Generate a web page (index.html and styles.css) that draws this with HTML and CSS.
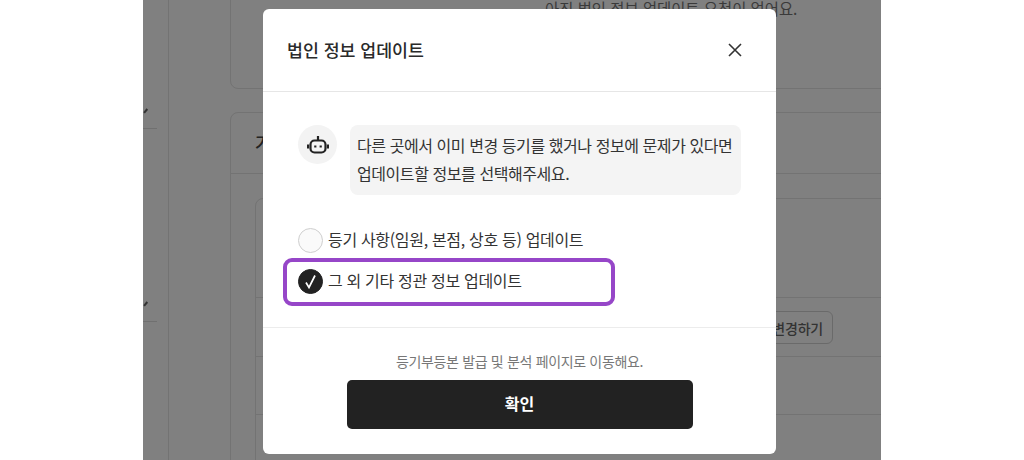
FILE: index.html
```html
<!DOCTYPE html>
<html lang="ko">
<head>
  <meta charset="UTF-8">
  <meta name="viewport" content="width=device-width, initial-scale=1.0">
  <title>법인 정보 업데이트</title>
  <link rel="stylesheet" href="styles.css">
</head>
<body>

  <!-- 뒤쪽 페이지 (어둡게 처리됨) -->
  <div class="page">
    <div class="side">
      <div class="side-item side-item-first"><span class="side-chevron"></span></div>
      <div class="side-item side-item-second"><span class="side-chevron"></span></div>
    </div>
    <div class="main">
      <div class="card card-top">
        <p class="empty-text">아직 법인 정보 업데이트 요청이 없어요.</p>
      </div>
      <div class="card card-bottom">
        <div class="card-title">가</div>
        <div class="card-body">
          <div class="inner-card">
            <div class="inner-row row-a"></div>
            <div class="inner-row row-b"><button class="change-btn">변경하기</button></div>
            <div class="inner-row row-c"></div>
            <div class="inner-row"></div>
          </div>
        </div>
      </div>
    </div>
  </div>

  <!-- 팝업창 -->
  <div class="modal">
    <div class="modal-header">
      <span class="modal-title">법인 정보 업데이트</span>
      <svg class="close-icon" width="16" height="16" viewBox="0 0 16 16" fill="none" stroke="#333" stroke-width="1.6">
        <path d="M2 2 14 14M14 2 2 14"/>
      </svg>
    </div>
    <div class="modal-body">
      <div class="message">
        <div class="bot-avatar">
          <svg width="22" height="22" viewBox="0 0 22 22" fill="none" stroke="#222" stroke-width="2.200">
            <rect x="3.500" y="6.500" width="15" height="12" rx="4"/>
            <path d="M11 2v4.500M1 10.500v4M21 10.500v4"/>
            <path d="M8.300 11.500v2M13.700 11.500v2"/>
          </svg>
        </div>
        <div class="bubble">다른 곳에서 이미 변경 등기를 했거나 정보에 문제가 있다면<br>업데이트할 정보를 선택해주세요.</div>
      </div>
      <div class="options">
        <div class="option">
          <span class="radio"></span>
          <span>등기 사항(임원, 본점, 상호 등) 업데이트</span>
        </div>
        <div class="option option-selected">
          <span class="radio radio-on">
            <svg width="15" height="16" viewBox="0 0 15 16" fill="none" stroke="#fff" stroke-width="1.700">
              <path d="M3 8.500 6 13.500 12 1.500"/>
            </svg>
          </span>
          <span>그 외 기타 정관 정보 업데이트</span>
        </div>
      </div>
    </div>
    <div class="modal-footer">
      <p class="footer-text">등기부등본 발급 및 분석 페이지로 이동해요.</p>
      <button class="confirm-btn">확인</button>
    </div>
  </div>

</body>
</html>
```

FILE: styles.css
```css
body {
  font-family: "Noto Sans CJK KR", "Noto Sans", sans-serif;
  background: #ffffff;
  margin: 0;
  width: 1024px;
  height: 460px;
  overflow: hidden;
  position: relative;
}

p {
  margin: 0;
}

.page {
  display: flex;
  width: 738px;
  height: 460px;
  margin-left: 143px;
  background: #808080;
  overflow: hidden;
}

.side {
  width: 25px;
  flex-shrink: 0;
  border-right: 1px solid #737373;
}

.side-item {
  width: 14px;
  border-bottom: 1px solid #707070;
  position: relative;
}

.side-item-first {
  height: 128px;
}

.side-item-second {
  height: 192px;
}

.side-chevron {
  position: absolute;
  left: 0;
  bottom: 17px;
  width: 5px;
  height: 1.500px;
  background: #333;
  transform: rotate(-50deg);
}

.main {
  flex: 1;
  padding-left: 61px;
  margin-top: -40px;
}

.card {
  width: 720px;
  background: #808080;
  border: 1px solid #737373;
  border-radius: 8px;
  box-sizing: border-box;
}

.card-top {
  height: 129px;
  margin-bottom: 23px;
  padding-top: 35px;
  text-align: left;
}

.empty-text {
  margin-left: 314px;
  font-size: 15.400px;
  line-height: 24px;
  color: #3a3a3a;
}

.card-bottom {
  height: 500px;
}

.card-title {
  height: 60px;
  border-bottom: 1px solid #737373;
  padding-left: 24px;
  font-size: 18px;
  font-weight: 500;
  line-height: 58px;
  color: #222;
}

.card-body {
  padding: 24px 0 0 24px;
}

.inner-card {
  border: 1px solid #737373;
  border-radius: 8px;
  width: 680px;
}

.inner-row {
  border-bottom: 1px solid #737373;
  height: 58px;
  box-sizing: border-box;
}

.row-a {
  height: 99px;
}

.row-b {
  height: 59px;
  padding: 13px 0 0 447px;
}

.change-btn {
  display: block;
  width: 130px;
  height: 33px;
  padding: 0 9px 0 0;
  background: transparent;
  border: 1px solid #6a6a6a;
  border-radius: 6px;
  font-family: inherit;
  font-size: 14px;
  font-weight: 500;
  letter-spacing: -0.200px;
  color: #333;
  text-align: right;
}

/* 팝업창 스타일 */
.modal {
  position: absolute;
  left: 263px;
  top: 9px;
  width: 513px;
  height: 445px;
  display: flex;
  flex-direction: column;
  background: #ffffff;
  border-radius: 6px;
}

.modal-header {
  height: 83px;
  box-sizing: border-box;
  flex-shrink: 0;
  display: flex;
  align-items: center;
  justify-content: space-between;
  padding: 0 33px 1px 24px;
  border-bottom: 1px solid #e6e6e6;
}

.modal-title {
  font-size: 17.300px;
  font-weight: 500;
  color: #2a2a2a;
}

.modal-body {
  height: 236px;
  flex-shrink: 0;
  box-sizing: border-box;
  padding: 33px 35px 0 35px;
  border-bottom: 1px solid #ececec;
}

.message {
  display: flex;
  gap: 13px;
  align-items: flex-start;
}

.bot-avatar {
  width: 39px;
  height: 39px;
  flex-shrink: 0;
  display: flex;
  align-items: center;
  justify-content: center;
  border-radius: 50%;
  background: #f3f3f3;
}

.bubble {
  width: 391px;
  height: 70px;
  box-sizing: border-box;
  padding: 6px 7px;
  background: #f4f4f4;
  border-radius: 8px;
  font-size: 16px;
  line-height: 28px;
  letter-spacing: -0.430px;
  color: #333;
  white-space: nowrap;
}

.options {
  margin-top: 33px;
  display: flex;
  flex-direction: column;
  gap: 16px;
}

.option {
  display: flex;
  align-items: center;
  gap: 5px;
  height: 25px;
  font-size: 16px;
  line-height: 22px;
  letter-spacing: -0.320px;
  color: #333;
  position: relative;
}

.option span:last-child {
  margin-top: -3px;
}

.option-selected::after {
  content: "";
  position: absolute;
  left: -15px;
  top: -11px;
  width: 332px;
  height: 48px;
  box-sizing: border-box;
  border: 4px solid #9646c8;
  border-radius: 9px;
}

.radio {
  width: 25px;
  height: 25px;
  flex-shrink: 0;
  box-sizing: border-box;
  display: flex;
  align-items: center;
  justify-content: center;
  border: 1px solid #cfcfcf;
  border-radius: 50%;
  background: #fafafa;
}

.radio-on {
  background: #222;
  border-color: #222;
}

.modal-footer {
  flex: 1;
  display: flex;
  flex-direction: column;
  align-items: center;
  padding-top: 22px;
}

.footer-text {
  font-size: 14px;
  line-height: 22px;
  letter-spacing: -0.340px;
  color: #777;
}

.confirm-btn {
  width: 346px;
  height: 49px;
  margin-top: 8px;
  padding: 0 0 4px;
  background: #222;
  border: none;
  border-radius: 5px;
  font-family: inherit;
  font-size: 16px;
  font-weight: 700;
  color: #fff;
}
```
